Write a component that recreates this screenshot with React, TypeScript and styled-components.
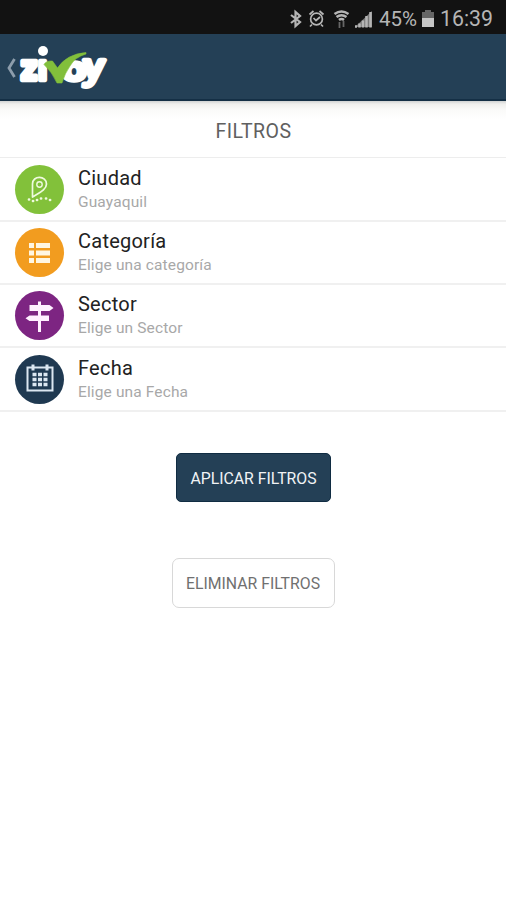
import React from "react";
import styled, { createGlobalStyle } from "styled-components";

const GlobalStyle = createGlobalStyle`
  * { box-sizing: border-box; }
  body { margin: 0; background: #fff; font-family: Roboto, sans-serif; }
  svg { display: block; flex: none; }
`;

const Screen = styled.main`
  width: 506px;
  height: 900px;
  overflow: hidden;
  background: #fff;
`;

const StatusBar = styled.div`
  height: 34px;
  background: #121212;
  color: #b5b5b5;
  display: flex;
  align-items: center;
  padding-left: 289px;
  padding-top: 2px;
`;

const StatusText = styled.span<{ $gap: number; $width: number; $size: number }>`
  margin-left: ${(p) => p.$gap}px;
  width: ${(p) => p.$width}px;
  font-size: ${(p) => p.$size}px;
  line-height: 32px;
  padding-top: 1px;
  white-space: nowrap;
`;

const Header = styled.header`
  height: 67px;
  background: #244056;
  border-bottom: 2px solid #142f45;
`;

const Title = styled.h1`
  margin: 0;
  height: 57px;
  padding: 1px 0 0 1px;
  background: linear-gradient(#d0d2d2 0, #efefed 3px, #fafaf9 9px, #fff 18px);
  border-bottom: 1px solid #ededed;
  color: #606060;
  font-size: 19.5px;
  font-weight: 400;
  line-height: 59px;
  text-align: center;
  letter-spacing: 0.5px;
`;

const Row = styled.div<{ $height: number }>`
  height: ${(p) => p.$height}px;
  padding-left: 15px;
  border-bottom: 2px solid #f0f0f0;
  display: flex;
  align-items: center;
  gap: 14px;
`;

const Badge = styled.div<{ $color: string }>`
  width: 49px;
  height: 49px;
  border-radius: 50%;
  background: ${(p) => p.$color};
`;

const Labels = styled.div`
  height: 49px;
  padding-top: 1px;
  display: flex;
  flex-direction: column;
`;

const Name = styled.div`
  color: #222;
  font-size: 20px;
  line-height: 25px;
  letter-spacing: 0.24px;
`;

const Value = styled.div`
  color: #a8a8a8;
  font-size: 15.5px;
  line-height: 23px;
  letter-spacing: 0.13px;
`;

const Actions = styled.div`
  display: flex;
  flex-direction: column;
  align-items: center;
  padding-top: 41px;
  gap: 56px;
`;

const Button = styled.button<{ $primary?: boolean }>`
  width: ${(p) => (p.$primary ? 155 : 163)}px;
  height: ${(p) => (p.$primary ? 49 : 50)}px;
  padding: ${(p) => (p.$primary ? "1px 0 0 1px" : "0")};
  border: 1px solid ${(p) => (p.$primary ? "#102c42" : "#d8d8d8")};
  border-radius: ${(p) => (p.$primary ? 5 : 7)}px;
  background: ${(p) => (p.$primary ? "#244056" : "#fff")};
  color: ${(p) => (p.$primary ? "#f0f3f5" : "#707070")};
  font-family: Roboto, sans-serif;
  font-size: 15.8px;
  white-space: nowrap;
`;

const StatusIcons = () => (
  <svg width="86" height="30" viewBox="289 3 86 30" fill="none" stroke="#b5b5b5">
    <path d="M291 15l9 7-4.500 4V12l4.500 4-9 7" strokeWidth="2.200" />
    <circle cx="316.500" cy="19" r="5.900" strokeWidth="1.700" />
    <path d="M313.500 18l2.500 2.500 4-3.500M309.500 14.500l4-3.500M323.500 14.500l-4-3.500M312 24.500l-2 2M321 24.500l2 2" strokeWidth="1.700" />
    <path d="M334.500 14q7-5 14 0M336.500 17q5-3.500 10 0M339 20q2.500-2 5 0" strokeWidth="2.500" />
    <path d="M339.500 22v6M343.500 21v6" stroke="#666" strokeWidth="1.800" />
    <path d="M355 27l17-16v16z" fill="#777" stroke="none" />
    <path d="M355 26.500h2M359.500 27.500v-4M363 27.500v-7M366.500 27.500V16M370.500 27.500V12" strokeWidth="2.500" />
  </svg>
);

const Battery = () => (
  <svg width="14" height="30" viewBox="421 3 14 30">
    <path d="M425 10h6v2h3v7h-12v-7h3z" fill="#666" />
    <path d="M422 18h12v9h-12z" fill="#c6c6c6" />
  </svg>
);

const Logo = () => (
  <svg width="120" height="65" viewBox="0 34 120 65" role="img" aria-label="zivoy">
    <path d="M14.500 59l-5.500 9 5.500 9" fill="none" stroke="#8d9dac" strokeWidth="2.800" />
    <g
      fill="#fff"
      stroke="#fff"
      strokeWidth="4.500"
      strokeLinejoin="round"
      fontFamily="DejaVu Sans, sans-serif"
      fontWeight="700"
    >
      <text x="20.500" y="80" fontSize="33" textLength="27" lengthAdjust="spacingAndGlyphs">zı</text>
      <text x="61" y="80.500" fontSize="33" textLength="26" lengthAdjust="spacingAndGlyphs" strokeWidth="3.500">o</text>
    </g>
    <text
      x="88"
      y="79.500"
      fill="#fff"
      stroke="#fff"
      strokeWidth="4.500"
      strokeLinejoin="round"
      fontFamily="Roboto, sans-serif"
      fontSize="36"
      fontWeight="400"
      textLength="21"
      lengthAdjust="spacingAndGlyphs"
      transform="skewX(-4)"
    >
      y
    </text>
    <circle cx="43" cy="51" r="5" fill="#fff" />
    <path
      d="M44 64.500q2-4 8.500-3.500l5 7q9-14 28.500-15.500v1.500q-11 3-16 12-5 7-8 17h-5q-5-11-13-18.500z"
      fill="#82bf3b"
      stroke="#82bf3b"
      strokeWidth=".6"
    />
  </svg>
);

const PinIcon = () => (
  <svg width="49" height="49" viewBox="0 0 49 49" fill="none" stroke="#effadf">
    <path d="M17.500 32V19c0-9 14-8.500 14 0 0 6-8 9-14 13z" strokeWidth="1.700" strokeLinejoin="round" />
    <circle cx="24.500" cy="19.500" r="2.700" strokeWidth="1.400" />
    <path d="M14 34.500h.1M18 36h.1M22 35h.1M26 33.500h.1M31 33.500h.1M35 35h.1" strokeWidth="2.700" strokeLinecap="round" />
  </svg>
);

const ListIcon = () => (
  <svg width="49" height="49" viewBox="0 0 49 49" fill="#fff6e2">
    <path d="M14 15h5v5h-5zM21 15h14v5H21zM14 22.500h5v5h-5zM21 22.500h14v5H21zM14 30h5v5h-5zM21 30h14v5H21z" />
  </svg>
);

const SignIcon = () => (
  <svg width="49" height="49" viewBox="0 0 49 49" fill="#fff0ff">
    <path d="M23 10.500h3V14h8.500l4 3-4 3H26v4.500h8V30h-8v11h-3V30h-8.500l-4-2.800 4-2.700H23V20h-8.500v-6H23z" />
  </svg>
);

const CalendarIcon = () => (
  <svg width="49" height="49" viewBox="0 0 49 49" fill="none" stroke="#dce7f1">
    <path d="M12.500 12.500h25v23h-25z" strokeWidth="2" />
    <path d="M18 9.500v6M32 9.500v6" strokeWidth="3" />
    <path d="M17.500 19.500h4M23 19.500h4M28.500 19.500h4M17.500 24.500h4M23 24.500h4M28.500 24.500h4M17.500 29.500h4M23 29.500h4M28.500 29.500h4" strokeWidth="3.700" />
  </svg>
);

const filters = [
  { name: "Ciudad", value: "Guayaquil", color: "#82c13a", icon: PinIcon, height: 64 },
  { name: "Categoría", value: "Elige una categoría", color: "#f29c1f", icon: ListIcon, height: 63 },
  { name: "Sector", value: "Elige un Sector", color: "#7d2582", icon: SignIcon, height: 63 },
  { name: "Fecha", value: "Elige una Fecha", color: "#1f3951", icon: CalendarIcon, height: 64 },
];

export default function App() {
  return (
    <Screen>
      <GlobalStyle />
      <StatusBar>
        <StatusIcons />
        <StatusText $gap={4} $width={42} $size={20.5}>45%</StatusText>
        <Battery />
        <StatusText $gap={5} $width={60} $size={21.3}>16:39</StatusText>
      </StatusBar>
      <Header>
        <Logo />
      </Header>
      <Title>FILTROS</Title>
      {filters.map(({ name, value, color, icon: Icon, height }) => (
        <Row key={name} $height={height}>
          <Badge $color={color}>
            <Icon />
          </Badge>
          <Labels>
            <Name>{name}</Name>
            <Value>{value}</Value>
          </Labels>
        </Row>
      ))}
      <Actions>
        <Button $primary>APLICAR FILTROS</Button>
        <Button>ELIMINAR FILTROS</Button>
      </Actions>
    </Screen>
  );
}
